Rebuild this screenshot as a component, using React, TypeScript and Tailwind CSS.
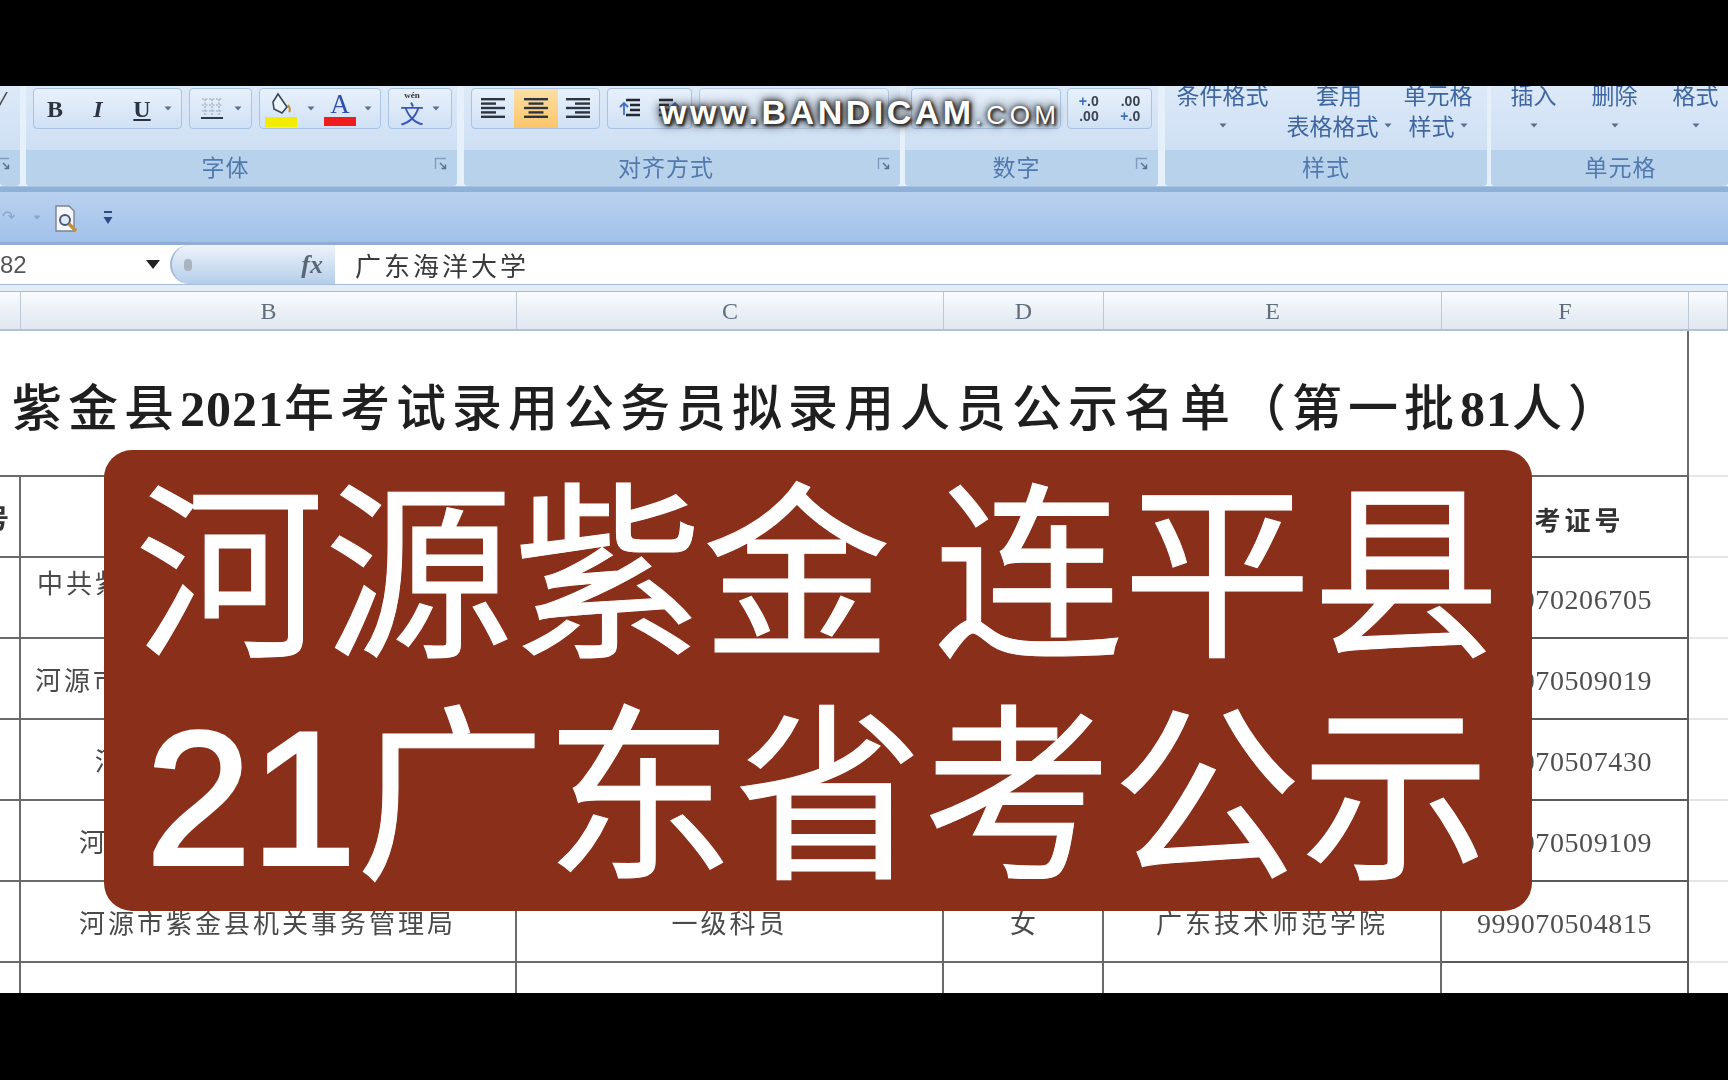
const CJK = "font-['Noto_Sans_CJK_SC',sans-serif]";

const ROWS = [
  { b: '中共紫金县', pl: 'pl-[16px] pt-[4px] items-start', f: '999070206705' },
  { b: '河源市紫金县', pl: 'pl-[14px] items-center', f: '999070509019' },
  { b: '河源市', pl: 'pl-[74px] items-center', f: '999070507430' },
  { b: '河源市', pl: 'pl-[58px] items-center', f: '999070509109' },
];

function Arrow({ className = '' }: { className?: string }) {
  return (
    <svg width="8" height="5" viewBox="0 0 8 5" className={className}>
      <path d="M0.5 0.5h7L4 4.5z" fill="#5a6f8c" />
    </svg>
  );
}

function Launcher({ className = '' }: { className?: string }) {
  return (
    <svg width="14" height="14" viewBox="0 0 14 14" className={className}>
      <path d="M1.5 12V1.5H12" fill="none" stroke="#7f9cc0" strokeWidth="1.4" />
      <path d="M6 6l5.5 5.5M11.5 7.5v4h-4" fill="none" stroke="#56718f" strokeWidth="1.4" />
    </svg>
  );
}

function BtnGroup({ className = '', children }: { className?: string; children?: React.ReactNode }) {
  return (
    <div className={`h-[41px] flex items-center border border-[#a9c3e2] rounded-[4px] bg-gradient-to-b from-[#e8f1fb] to-[#d0e1f5] overflow-hidden ${className}`}>
      {children}
    </div>
  );
}

function Lines({ kind }: { kind: 'left' | 'center' | 'right' }) {
  const rows = [24, 15, 24, 15, 24].map((w, i) => {
    const x = kind === 'left' ? 0 : kind === 'center' ? (24 - w) / 2 : 24 - w;
    return <rect key={i} x={x} y={i * 4.4} width={w} height="2.4" fill="#2f3540" />;
  });
  return (
    <svg width="24" height="21" viewBox="0 0 24 21">
      {rows}
    </svg>
  );
}

function IndentIcon({ flip = false }: { flip?: boolean }) {
  return (
    <svg width="24" height="24" viewBox="0 0 24 24" className={flip ? '-scale-x-100' : ''}>
      <path d="M9 3h14M13 8h10M13 13h10M9 18h14" stroke="#23272f" strokeWidth="2.4" />
      <path d="M7 6v12M3 10l4-4 4 4" fill="none" stroke="#3f6fc0" strokeWidth="1.8" />
    </svg>
  );
}

function Group({ className, label, labelClass = '', launcher, children }: { className: string; label: string; labelClass?: string; launcher?: boolean; children?: React.ReactNode }) {
  return (
    <div className={`flex flex-col h-[100px] shrink-0 ${className}`}>
      <div className="h-[64px] overflow-hidden bg-gradient-to-b from-[#dce9f8] to-[#cfe0f4]">{children}</div>
      <div className={`h-[36px] flex items-center justify-center relative bg-[#b9d2ec] rounded-b-[4px] pb-[3px] ${labelClass}`}>
        <span className={`text-[23px] text-[#5279ae] tracking-[1px] ${CJK}`}>{label}</span>
        {launcher && <Launcher className="absolute right-[9px] top-[7px]" />}
      </div>
    </div>
  );
}

function StyleCol({ className, top, bottom, arrow = true }: { className: string; top: string; bottom?: string; arrow?: boolean }) {
  return (
    <div className={`flex flex-col items-center shrink-0 ${className}`}>
      <span className={`text-[23px] leading-[31px] whitespace-nowrap text-[#3f66a0] ${CJK}`}>{top}</span>
      <span className={`h-[31px] flex items-center gap-[5px] text-[23px] whitespace-nowrap text-[#3f66a0] ${CJK}`}>
        {bottom}
        {arrow && <Arrow />}
      </span>
    </div>
  );
}

function Ribbon() {
  return (
    <div className="h-[106px] bg-[#e6f0fb] flex flex-col">
      <div className="flex h-[100px]">
        <Group className="w-[20px] mr-[6px]" label="" launcher>
          <div className="h-full flex justify-end items-start pr-[14px]">
            <span className="font-['Liberation_Serif',serif] italic font-bold text-[24px] leading-[26px] text-[#444]">/</span>
          </div>
        </Group>

        <Group className="w-[431px] mr-[7px]" label="字体" labelClass="pr-[32px]" launcher>
          <div className="flex pl-[7px] pt-[2px] gap-[7px] font-['Liberation_Serif',serif] text-[#2c3340]">
            <BtnGroup className="w-[149px]">
              <span className="w-[42px] text-center text-[24px] font-bold">B</span>
              <span className="w-[44px] text-center text-[24px] font-bold italic">I</span>
              <span className="w-[44px] text-center text-[24px] font-bold underline">U</span>
              <Arrow />
            </BtnGroup>
            <BtnGroup className="w-[63px] pl-[10px] gap-[10px]">
              <svg width="24" height="24" viewBox="0 0 24 24">
                <path d="M2 2h20M2 8h20M2 14h20M5 2v16M12 2v16M19 2v16" stroke="#9aa7b8" strokeWidth="1.2" strokeDasharray="2 1.5" fill="none" />
                <path d="M1 21h22" stroke="#2f3a4a" strokeWidth="2" />
              </svg>
              <Arrow />
            </BtnGroup>
            <BtnGroup className="w-[122px] pl-[4px]">
              <svg width="34" height="36" viewBox="0 0 34 36">
                <path d="M14 3l9 13-5 6-8-4-1-7z" fill="#eef4fb" stroke="#39465a" strokeWidth="1.6" />
                <path d="M24 14c2 3 3 5 1 7" fill="none" stroke="#c58f1e" strokeWidth="2" />
                <rect x="1" y="26" width="32" height="10" fill="#f4ec00" />
              </svg>
              <Arrow className="ml-[9px]" />
              <div className="ml-[9px] w-[32px] flex flex-col items-center">
                <span className="text-[27px] leading-[26px] text-[#2f4fa8]">A</span>
                <span className="w-full h-[9px] bg-[#ee1c1c]" />
              </div>
              <Arrow className="ml-[8px]" />
            </BtnGroup>
            <BtnGroup className="w-[64px] pl-[9px] gap-[6px]">
              <div className="w-[28px] flex flex-col items-center leading-none">
                <span className="text-[9px] font-bold text-[#333] leading-[9px]">wén</span>
                <span className={`text-[24px] leading-[26px] text-[#3a58b0] ${CJK}`}>文</span>
              </div>
              <Arrow />
            </BtnGroup>
          </div>
        </Group>

        <Group className="w-[436px] mr-[5px]" label="对齐方式" labelClass="pr-[32px]" launcher>
          <div className="flex pl-[7px] pt-[2px] gap-[7px]">
            <BtnGroup className="w-[129px]">
              <span className="w-[43px] flex justify-center"><Lines kind="left" /></span>
              <span className="w-[44px] h-full flex items-center justify-center bg-gradient-to-b from-[#fde0a4] to-[#fbc56c]"><Lines kind="center" /></span>
              <span className="w-[42px] flex justify-center"><Lines kind="right" /></span>
            </BtnGroup>
            <BtnGroup className="w-[85px] justify-around">
              <IndentIcon />
              <IndentIcon flip />
            </BtnGroup>
            <BtnGroup className="w-[190px] border-[#b9cde6]" />
          </div>
        </Group>

        <Group className="w-[253px] mr-[7px]" label="数字" labelClass="pr-[30px]" launcher>
          <div className="flex pl-[6px] pt-[2px] gap-[6px]">
            <BtnGroup className="w-[150px]" />
            <BtnGroup className="w-[85px] justify-around font-['Liberation_Sans',sans-serif] text-[14px] leading-[15px] font-bold text-[#3a4350]">
              <span className="flex flex-col items-end"><span><span className="text-[#3f6fc0]">+</span>.0</span><span>.00</span></span>
              <span className="flex flex-col items-end"><span>.00</span><span><span className="text-[#3f6fc0]">+</span>.0</span></span>
            </BtnGroup>
          </div>
        </Group>

        <Group className="w-[322px] mr-[4px]" label="样式">
          <div className="flex -mt-[7px]">
            <StyleCol className="w-[115px]" top="条件格式" />
            <StyleCol className="w-[118px]" top="套用" bottom="表格格式" />
            <StyleCol className="w-[80px]" top="单元格" bottom="样式" />
          </div>
        </Group>

        <Group className="w-[237px]" label="单元格" labelClass="pl-[22px]">
          <div className="flex -mt-[7px] pl-[2px]">
            <StyleCol className="w-[81px]" top="插入" />
            <StyleCol className="w-[81px]" top="删除" />
            <StyleCol className="w-[81px]" top="格式" />
          </div>
        </Group>
      </div>
      <div className="h-[6px] bg-[#8fb0d9] border-t border-[#a8c3e4]" />
    </div>
  );
}

function QuickBar() {
  return (
    <div className="h-[53px] flex items-center bg-gradient-to-b from-[#b9d1f0] to-[#a2c1e9] border-b-[3px] border-[#8eacd4]">
      <span className="w-[33px] text-[#8ea6c4] pl-[2px] font-['Liberation_Sans',sans-serif]">↷</span>
      <Arrow className="opacity-40" />
      <svg width="28" height="30" viewBox="0 0 28 30" className="ml-[12px] mt-[4px]">
        <path d="M3 2h13l5 5v20H3z" fill="#f5f7fb" stroke="#7a8494" strokeWidth="1.4" />
        <circle cx="12" cy="16" r="5" fill="#dfe9f5" stroke="#4c5a6c" strokeWidth="2" />
        <path d="M16 20l7 7" stroke="#c98f2c" strokeWidth="3.4" />
      </svg>
      <svg width="10" height="16" viewBox="0 0 10 16" className="ml-[22px] mt-[2px]">
        <path d="M1 2h8" stroke="#2c4a86" strokeWidth="2" />
        <path d="M0.5 7h9L5 14z" fill="#2c4a86" />
      </svg>
    </div>
  );
}

function FormulaBar() {
  return (
    <div className="h-[39px] flex items-center bg-white">
      <div className="w-[170px] flex items-center justify-between pr-[10px]">
        <span className="font-['Liberation_Sans',sans-serif] text-[24px] text-[#555]">82</span>
        <svg width="14" height="9" viewBox="0 0 14 9"><path d="M0 0h14L7 9z" fill="#222" /></svg>
      </div>
      <div className="w-[165px] h-full flex items-center justify-between pl-[12px] pr-[12px] rounded-l-[22px] border-l-2 border-[#9fb8d6] bg-gradient-to-b from-[#eef4fb] to-[#b5cdea]">
        <span className="w-[8px] h-[12px] rounded-full bg-[#aab4c0]" />
        <span className="font-['Liberation_Serif',serif] italic font-bold text-[26px] text-[#5a6675]">fx</span>
      </div>
      <span className={`ml-[20px] text-[26px] tracking-[3px] text-[#3a3a3a] ${CJK}`}>广东海洋大学</span>
    </div>
  );
}

function ColumnHeader() {
  const cols = [
    { w: 'w-[21px]', t: '' },
    { w: 'w-[496px]', t: 'B' },
    { w: 'w-[427px]', t: 'C' },
    { w: 'w-[160px]', t: 'D' },
    { w: 'w-[338px]', t: 'E' },
    { w: 'w-[247px]', t: 'F' },
    { w: 'flex-1', t: '' },
  ];
  return (
    <div className="flex flex-col">
      <div className="h-[8px] bg-[#e4edf6] border-y border-[#a6bdd6]" />
      <div className="h-[39px] flex bg-gradient-to-b from-[#f9fbfe] to-[#dfe7f0] border-b-2 border-[#b3c2d2]">
        {cols.map((c, i) => (
          <div key={i} className={`${c.w} flex items-center justify-center border-r border-[#bcc8d4] font-['Liberation_Serif',serif] text-[24px] text-[#5f6d7c]`}>
            {c.t}
          </div>
        ))}
      </div>
    </div>
  );
}

function Row({ a, b, bClass, c, d, e, f, fClass }: { a?: string; b?: string; bClass?: string; c?: string; d?: string; e?: string; f?: string; fClass?: string }) {
  return (
    <div className="flex h-[81px] shrink-0">
      <div className="w-[21px] flex items-center justify-end pr-[10px] overflow-hidden border-b-2 border-r-2 border-[#6a6a6a] text-[26px] font-bold text-[#333]">
        <span className={`shrink-0 ${CJK}`}>{a}</span>
      </div>
      <div className={`w-[496px] flex border-b-2 border-r-2 border-[#6a6a6a] text-[26px] tracking-[3px] text-[#4a4a4a] ${CJK} ${bClass ?? ''}`}>{b}</div>
      <div className={`w-[427px] flex items-center justify-center border-b-2 border-r-2 border-[#6a6a6a] text-[26px] tracking-[3px] text-[#4a4a4a] ${CJK}`}>{c}</div>
      <div className={`w-[160px] flex items-center justify-center border-b-2 border-r-2 border-[#6a6a6a] text-[26px] text-[#4a4a4a] ${CJK}`}>{d}</div>
      <div className={`w-[338px] flex items-center justify-center border-b-2 border-r-2 border-[#6a6a6a] text-[26px] tracking-[3px] text-[#4a4a4a] ${CJK}`}>{e}</div>
      <div className={`w-[247px] flex items-center justify-center border-b-2 border-r-2 border-[#5a5a5a] pt-[4px] font-['Liberation_Serif',serif] text-[#4f4f4f] ${fClass ?? 'text-[28px] tracking-[0.6px]'}`}>{f}</div>
      <div className="flex-1 border-b-2 border-[#e6e6e6]" />
    </div>
  );
}

function Sheet() {
  return (
    <div className="flex flex-col bg-white">
      <div className="h-[146px] shrink-0 flex">
        <div className="w-[1689px] flex items-center border-r-2 border-b-2 border-[#6a6a6a] pl-[12px] pt-[7px]">
          <span className={`text-[50px] font-medium tracking-[6px] whitespace-nowrap text-[#1f1f1f] ${CJK}`}>
            紫金县<span className="font-['Liberation_Serif',serif] font-bold tracking-[1px]">2021</span>年考试录用公务员拟录用人员公示名单（第一批<span className="font-['Liberation_Serif',serif] font-bold tracking-[1px]">81</span>人）
          </span>
        </div>
        <div className="flex-1 border-b-2 border-[#e6e6e6]" />
      </div>
      <Row a="号" f="准考证号" fClass={`text-[26px] font-bold tracking-[4px] text-[#333] ${CJK}`} />
      {ROWS.map((r) => (
        <Row key={r.f} b={r.b} bClass={r.pl} f={r.f} />
      ))}
      <Row
        b="河源市紫金县机关事务管理局"
        bClass="pl-[58px] items-center"
        c="一级科员"
        d="女"
        e="广东技术师范学院"
        f="999070504815"
      />
      <Row />
    </div>
  );
}

export default function App() {
  return (
    <div className="relative w-[1728px] h-[1080px] bg-black overflow-hidden">
      <div className="absolute inset-x-0 top-[86px] h-[907px] overflow-hidden blur-[0.7px]">
        <Ribbon />
        <QuickBar />
        <FormulaBar />
        <ColumnHeader />
        <Sheet />
      </div>

      {/* recorder watermark */}
      <div className="absolute left-[660px] top-[87px] h-[42px] flex items-baseline font-['Liberation_Sans',sans-serif] text-white text-[34px] font-bold tracking-[3.5px] [text-shadow:0_0_4px_#333,0_0_8px_#333,0_0_12px_#444,2px_2px_3px_#111]">
        www.BANDICAM<span className="text-[26px] font-normal tracking-[4.5px]">.COM</span>
      </div>

      {/* title card */}
      <div className={`absolute left-[104px] top-[450px] w-[1428px] h-[461px] rounded-[28px] bg-[#8a2f1a] flex flex-col items-center justify-center pb-[3px] text-white text-[189px] leading-[222px] whitespace-nowrap [-webkit-text-stroke:1px_white] ${CJK}`}>
        <div>河源紫金 连平县</div>
        <div>
          <span className="font-['Liberation_Sans',sans-serif] [-webkit-text-stroke:4px_white]">21</span>广东省考公示
        </div>
      </div>
    </div>
  );
}
